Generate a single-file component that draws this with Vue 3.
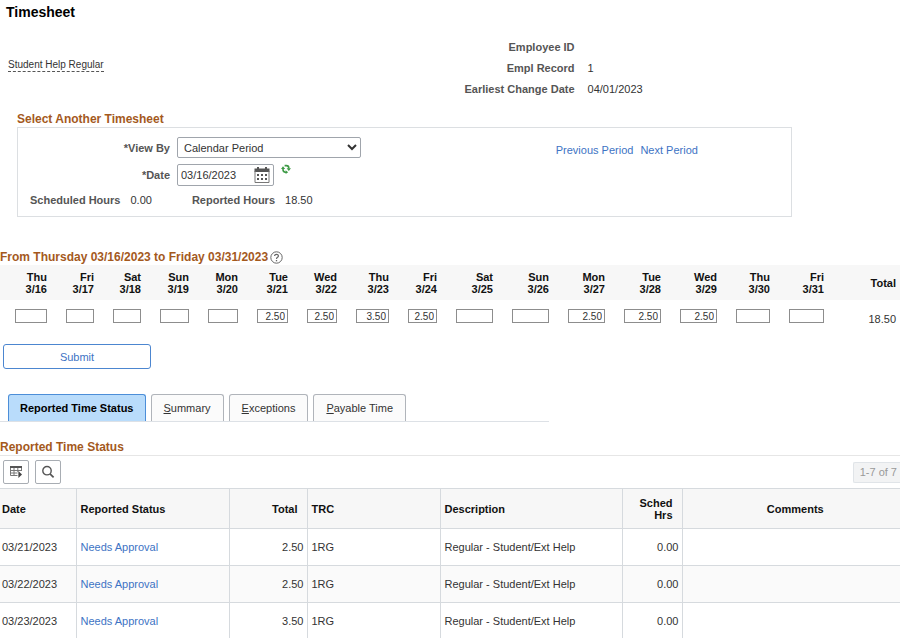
<script setup>
import { ref, computed } from 'vue'

const viewBy = ref('Calendar Period')
const date = ref('03/16/2023')

const days = ref([
  { name: 'Thu', date: '3/16', hours: '', weight: 47 },
  { name: 'Fri', date: '3/17', hours: '', weight: 47 },
  { name: 'Sat', date: '3/18', hours: '', weight: 47 },
  { name: 'Sun', date: '3/19', hours: '', weight: 48 },
  { name: 'Mon', date: '3/20', hours: '', weight: 49 },
  { name: 'Tue', date: '3/21', hours: '2.50', weight: 50 },
  { name: 'Wed', date: '3/22', hours: '2.50', weight: 49 },
  { name: 'Thu', date: '3/23', hours: '3.50', weight: 52 },
  { name: 'Fri', date: '3/24', hours: '2.50', weight: 48 },
  { name: 'Sat', date: '3/25', hours: '', weight: 56 },
  { name: 'Sun', date: '3/26', hours: '', weight: 56 },
  { name: 'Mon', date: '3/27', hours: '2.50', weight: 56 },
  { name: 'Tue', date: '3/28', hours: '2.50', weight: 56 },
  { name: 'Wed', date: '3/29', hours: '2.50', weight: 56 },
  { name: 'Thu', date: '3/30', hours: '', weight: 53 },
  { name: 'Fri', date: '3/31', hours: '', weight: 54 },
])
const totalWeight = 76
const weightSum = computed(() => days.value.reduce((sum, d) => sum + d.weight, totalWeight))
const share = (weight) => ({ width: (weight / weightSum.value) * 100 + '%' })
const total = computed(() => days.value.reduce((sum, d) => sum + (Number(d.hours) || 0), 0).toFixed(2))

const tabs = [
  { key: '', rest: 'Reported Time Status' },
  { key: 'S', rest: 'ummary' },
  { key: 'E', rest: 'xceptions' },
  { key: 'P', rest: 'ayable Time' },
]
const activeTab = ref(0)

const rows = [
  { date: '03/21/2023', status: 'Needs Approval', total: '2.50', trc: '1RG', description: 'Regular - Student/Ext Help', sched: '0.00' },
  { date: '03/22/2023', status: 'Needs Approval', total: '2.50', trc: '1RG', description: 'Regular - Student/Ext Help', sched: '0.00' },
  { date: '03/23/2023', status: 'Needs Approval', total: '3.50', trc: '1RG', description: 'Regular - Student/Ext Help', sched: '0.00' },
]
</script>

<template>
  <main class="page">
    <h1>Timesheet</h1>

    <header class="summary">
      <div class="job"><span>Student Help Regular</span></div>
      <dl class="facts">
        <dt>Employee ID</dt><dd></dd>
        <dt>Empl Record</dt><dd>1</dd>
        <dt>Earliest Change Date</dt><dd>04/01/2023</dd>
      </dl>
    </header>

    <section class="picker">
      <h2>Select Another Timesheet</h2>
      <div class="panel">
        <div class="fields">
          <div class="field">
            <label for="view-by">*View By</label>
            <select id="view-by" v-model="viewBy">
              <option>Calendar Period</option>
              <option>Day</option>
              <option>Week</option>
            </select>
          </div>
          <div class="field">
            <label for="date">*Date</label>
            <div class="date-box">
              <input id="date" v-model="date" type="text" />
              <button type="button" class="bare" aria-label="Choose a date">
                <svg width="16" height="16" viewBox="0 0 16 16">
                  <path d="M0.5 1.5h15V5h-15z" fill="#555" />
                  <path d="M3 0h2v3H3zM11 0h2v3h-2z" fill="#555" />
                  <path d="M1 4v11.5h14V4" fill="none" stroke="#777" />
                  <path d="M3 7h2v2H3zM7 7h2v2H7zM11 7h2v2h-2zM3 11h2v2H3zM7 11h2v2H7zM11 11h2v2h-2z" fill="#555" />
                </svg>
              </button>
            </div>
            <button type="button" class="bare refresh" aria-label="Refresh">
              <svg width="10" height="10" viewBox="0 0 10 10">
                <path d="M3.6 1.6H5.4Q7.8 1.6 7.8 4v.6" fill="none" stroke="#3d9a45" stroke-width="1.6" />
                <path d="M5.6 4.2H10L7.8 7z" fill="#3d9a45" />
                <path d="M2 4.4V5.6Q2 8.2 4.4 8.2H5" fill="none" stroke="#3d9a45" stroke-width="1.6" />
                <path d="M0 5L2 2.2 4.2 5z" fill="#3d9a45" />
                <path d="M4.6 6.2V10L7.2 8.2z" fill="#3d9a45" />
              </svg>
            </button>
          </div>
          <dl class="hours">
            <dt>Scheduled Hours</dt><dd>0.00</dd>
            <dt>Reported Hours</dt><dd>18.50</dd>
          </dl>
        </div>
        <nav class="periods">
          <a href="#previous">Previous Period</a>
          <a href="#next">Next Period</a>
        </nav>
      </div>
    </section>

    <section class="week">
      <h2>
        From Thursday 03/16/2023 to Friday 03/31/2023
        <button type="button" class="bare" aria-label="Help">
          <svg width="13" height="13" viewBox="0 0 13 13" fill="none" stroke="#666">
            <circle cx="6.5" cy="6.5" r="5.7" />
            <path d="M4.6 5.1C4.6 2.7 8.4 2.7 8.4 5 8.4 6.4 6.5 6.3 6.5 8" stroke-width="1.2" />
            <path d="M6.5 9v1.3" stroke-width="1.3" />
          </svg>
        </button>
      </h2>
      <table class="entry">
        <colgroup>
          <col v-for="d in days" :key="d.date" :style="share(d.weight)" />
          <col :style="share(totalWeight)" />
        </colgroup>
        <thead>
          <tr>
            <th v-for="d in days" :key="d.date" scope="col">{{ d.name }}<br />{{ d.date }}</th>
            <th scope="col" class="sum">Total</th>
          </tr>
        </thead>
        <tbody>
          <tr>
            <td v-for="d in days" :key="d.date">
              <input v-model="d.hours" type="text" :aria-label="d.name + ' ' + d.date" />
            </td>
            <td class="sum">{{ total }}</td>
          </tr>
        </tbody>
      </table>
      <button type="button" class="submit">Submit</button>
    </section>

    <div class="tabs" role="tablist">
      <button
        v-for="(t, i) in tabs"
        :key="t.rest"
        type="button"
        role="tab"
        :aria-selected="i === activeTab"
        :class="{ active: i === activeTab }"
        @click="activeTab = i"
      ><u v-if="t.key">{{ t.key }}</u>{{ t.rest }}</button>
    </div>

    <section class="report">
      <h2>Reported Time Status</h2>
      <div class="toolbar">
        <button type="button" class="tool" aria-label="Grid actions">
          <svg width="14" height="14" viewBox="0 0 14 14">
            <path d="M1 1h12v2H1z" fill="#555" />
            <path d="M1.5 3v7.5H8.5M12.5 3v3M1.5 5.5h11M1.5 8H8.5M5 3v7.5M8.8 3v4" fill="none" stroke="#777" />
            <path d="M9.4 6L13 9.5 9.4 13z" fill="#444" />
          </svg>
        </button>
        <button type="button" class="tool" aria-label="Find">
          <svg width="14" height="14" viewBox="0 0 14 14" fill="none" stroke="#555">
            <circle cx="6" cy="5.7" r="4.2" stroke-width="1.4" />
            <path d="M9 8.8l3.6 3.6" stroke-width="1.7" />
          </svg>
        </button>
        <span class="pager">1-7 of 7</span>
      </div>
      <table class="grid">
        <colgroup>
          <col class="c-date" /><col class="c-status" /><col class="c-total" /><col class="c-trc" />
          <col class="c-desc" /><col class="c-sched" /><col />
        </colgroup>
        <thead>
          <tr>
            <th scope="col">Date</th>
            <th scope="col">Reported Status</th>
            <th scope="col" class="num head-num">Total</th>
            <th scope="col">TRC</th>
            <th scope="col">Description</th>
            <th scope="col" class="num head-num">Sched<br />Hrs</th>
            <th scope="col" class="mid">Comments</th>
          </tr>
        </thead>
        <tbody>
          <tr v-for="r in rows" :key="r.date">
            <td>{{ r.date }}</td>
            <td><a href="#status">{{ r.status }}</a></td>
            <td class="num">{{ r.total }}</td>
            <td>{{ r.trc }}</td>
            <td>{{ r.description }}</td>
            <td class="num">{{ r.sched }}</td>
            <td></td>
          </tr>
        </tbody>
      </table>
    </section>
  </main>
</template>

<style>
body {
  margin: 0;
  background: #fff;
}
</style>

<style scoped>
.page {
  overflow-x: hidden;
  font: 11px/12px "Liberation Sans", Arial, sans-serif;
  color: #333;
}
.page *,
.page *::before {
  box-sizing: border-box;
}
h1, h2, dl, dd {
  margin: 0;
}
h1 {
  padding-left: 6px;
  font-size: 14px;
  line-height: 24px;
  color: #000;
}
h2 {
  font-size: 12px;
  line-height: 16px;
  color: #a4591d;
}
a {
  color: #3d73c4;
  text-decoration: none;
}
button, input, select {
  margin: 0;
  font-family: inherit;
  font-size: 11px;
  color: #333;
}
.bare {
  display: inline-flex;
  padding: 0;
  border: 0;
  background: none;
}
dt, label {
  font-weight: bold;
  color: #555;
}

.summary {
  display: grid;
  grid-template-columns: 16fr 15fr;
  padding-top: 13px;
}
.job {
  padding: 22px 0 0 8px;
  font-size: 10px;
}
.job span {
  display: inline-block;
  border-bottom: 1px dashed #555;
}
.facts {
  display: grid;
  grid-template-columns: auto 1fr;
  gap: 1px 13px;
  line-height: 20px;
}
.facts dt {
  text-align: right;
}

.picker {
  margin: 12px 12% 0 17px;
}
.panel {
  display: grid;
  grid-template-columns: 16fr 7fr;
  padding: 9px 0 8px;
  border: 1px solid #dcdfe2;
}
.fields {
  display: grid;
  gap: 6px;
}
.field {
  display: flex;
  align-items: center;
  gap: 7px;
}
.field label {
  width: 152px;
  text-align: right;
}
.field select {
  width: 184px;
  height: 21px;
  padding: 0 0 0 2px;
  border: 1px solid #a0a5ac;
  border-radius: 2px;
  background: #fff;
}
.date-box {
  display: flex;
  align-items: center;
  justify-content: space-between;
  width: 97px;
  height: 22px;
  padding: 0 3px;
  border: 1px solid #a0a5ac;
  border-radius: 2px;
}
.date-box input {
  flex: 1;
  min-width: 0;
  padding: 0;
  border: 0;
  outline: 0;
}
.refresh {
  align-self: flex-start;
}
.hours {
  display: flex;
  gap: 10px;
  padding-left: 12px;
  line-height: 16px;
}
.hours dd + dt {
  margin-left: 30px;
}
.periods {
  display: flex;
  gap: 7px;
  line-height: 26px;
}

.week {
  margin-top: 32px;
}
.week h2 {
  display: flex;
  align-items: center;
  gap: 2px;
}
.entry {
  width: 100%;
  table-layout: fixed;
  border-collapse: collapse;
}
.entry th {
  height: 35px;
  padding: 0;
  background: #f7f7f7;
  color: #111;
  text-align: right;
}
.entry td {
  height: 36px;
  padding: 9px 0 0 19px;
  vertical-align: top;
}
.entry td:first-child {
  padding-left: 15px;
}
.entry input {
  display: block;
  width: 100%;
  height: 14px;
  padding: 0 2px;
  border: 1px solid #8d8d8d;
  border-radius: 0;
  font-size: 10px;
  text-align: right;
}
.entry .sum {
  padding-right: 4px;
  text-align: right;
}
.entry td.sum {
  padding-top: 13px;
}
.submit {
  display: block;
  width: 148px;
  height: 25px;
  margin: 8px 0 0 3px;
  border: 1px solid #4c86d0;
  border-radius: 3px;
  background: #fff;
  color: #3d73c4;
}

.tabs {
  display: flex;
  gap: 5px;
  width: 61%;
  margin-top: 25px;
  padding-left: 8px;
  border-bottom: 1px solid #dde1e6;
}
.tabs button {
  height: 27px;
  padding: 0 12px;
  border: 1px solid #b0b4ba;
  border-bottom: 0;
  border-radius: 3px 3px 0 0;
  background: #fbfbfb;
}
.tabs .active {
  padding: 0 11px;
  border-color: #4c8ed8;
  background: #b9dcfb;
  color: #000;
  font-weight: bold;
}

.report {
  margin-top: 17px;
}
.report h2 {
  border-bottom: 1px solid #e6e6e6;
}
.toolbar {
  display: flex;
  align-items: center;
  gap: 6px;
  height: 32px;
  padding-left: 3px;
}
.tool {
  display: flex;
  align-items: center;
  justify-content: center;
  width: 26px;
  height: 24px;
  padding: 0;
  border: 1px solid #a8adb3;
  border-radius: 2px;
  background: #fff;
}
.pager {
  margin-left: auto;
  padding: 0 3px 0 6px;
  border: 1px solid #e0e4e8;
  border-right: 0;
  border-radius: 2px 0 0 2px;
  background: #f2f3f4;
  color: #999;
  line-height: 19px;
}
.grid {
  width: 100%;
  table-layout: fixed;
  border-collapse: collapse;
}
.c-date { width: 76px; }
.c-status { width: 153px; }
.c-total { width: 78px; }
.c-trc { width: 133px; }
.c-desc { width: 182px; }
.c-sched { width: 60px; }
.grid th,
.grid td {
  height: 37px;
  padding: 0 4px;
  border: 1px solid #d6dade;
  border-width: 1px 0 0 1px;
  text-align: left;
}
.grid th:first-child,
.grid td:first-child {
  padding-left: 2px;
  border-left: 0;
}
.grid th {
  height: 40px;
  background: #f7f7f7;
  color: #111;
}
.grid tbody tr:nth-child(even) {
  background: #fafafa;
}
.grid .num {
  padding-right: 3px;
  text-align: right;
}
.grid .head-num {
  padding-right: 9px;
}
.grid .mid {
  padding-left: 12px;
  text-align: center;
}
</style>
